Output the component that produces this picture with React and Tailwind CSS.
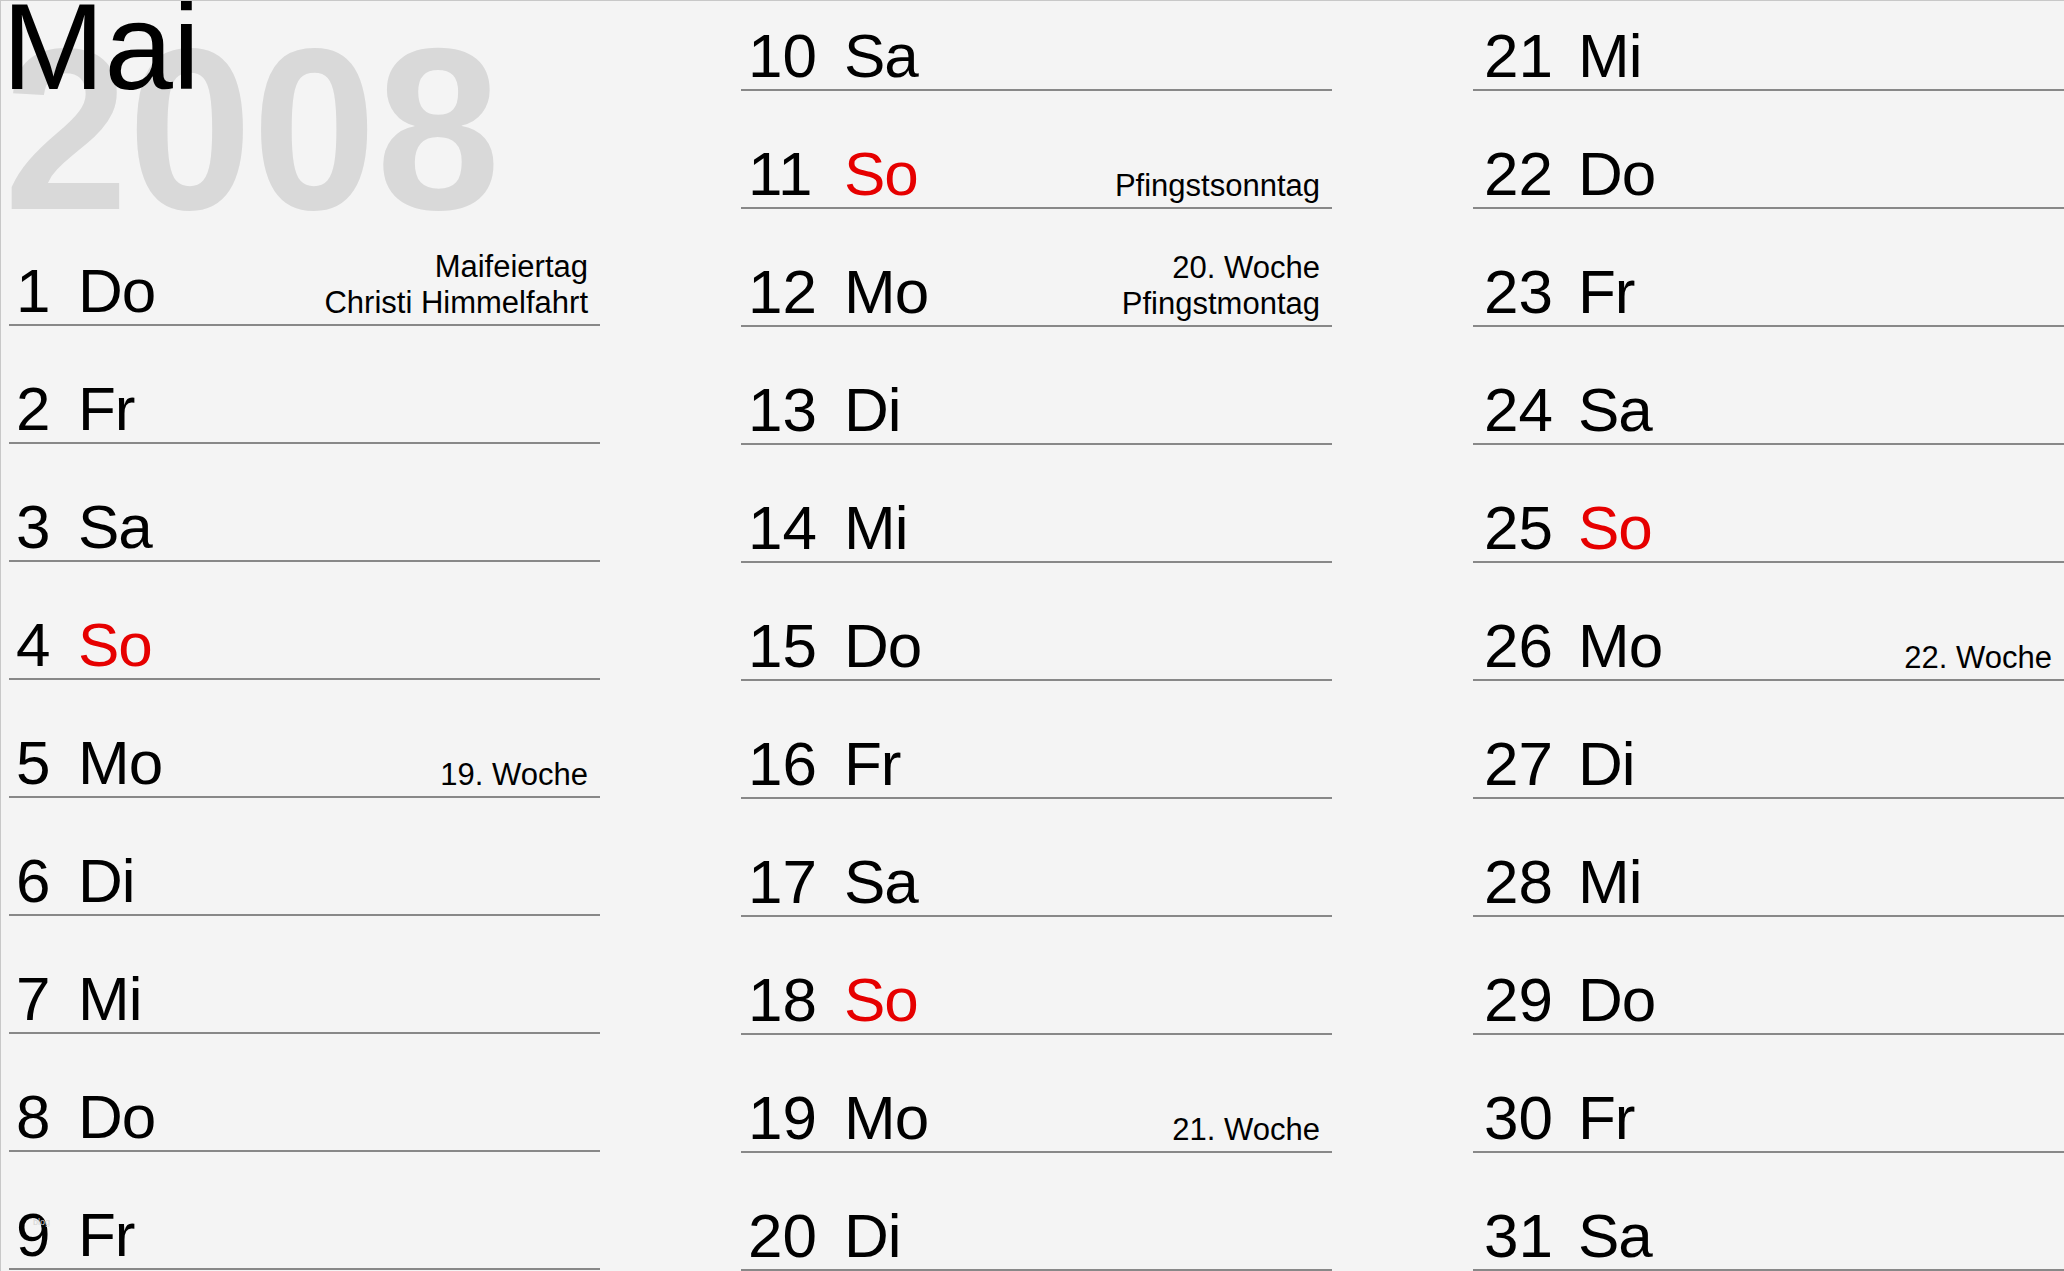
import React from "react";

const DAYS = ["Do","Fr","Sa","So","Mo","Di","Mi"];
const LABELS = {
  1: ["Maifeiertag", "Christi Himmelfahrt"],
  5: ["19. Woche"],
  11: ["Pfingstsonntag"],
  12: ["20. Woche", "Pfingstmontag"],
  19: ["21. Woche"],
  26: ["22. Woche"],
};

function dayRow(d, first, numCls, extra) {
  const wd = DAYS[(d - 1) % 7];
  const lab = LABELS[d];
  return (
    <div
      key={d}
      className={
        (first ? "h-[90px] " : "h-[118px] ") +
        "relative flex items-end border-b-2 border-[#888888] shrink-0"
      }
    >
      <div className="flex items-end pb-[2px] text-[62px] leading-none text-black">
        <span className={numCls}>{d}</span>
        <span className={wd === "So" ? "text-[#e60000] tracking-[-1px]" : "text-black tracking-[-1px]"}>{wd}</span>
      </div>
      <div className="ml-auto pr-[12px] pb-[3px] text-right text-[31px] leading-[36px] text-black">
        {lab && lab.map((l) => <div key={l}>{l}</div>)}
      </div>
      {extra}
    </div>
  );
}

export default function App() {
  const col1 = [1, 2, 3, 4, 5, 6, 7, 8, 9];
  const col2 = [10, 11, 12, 13, 14, 15, 16, 17, 18, 19, 20];
  const col3 = [21, 22, 23, 24, 25, 26, 27, 28, 29, 30, 31];
  return (
    <div
      className="w-[2064px] h-[1271px] overflow-hidden bg-[#f4f4f4] border-l border-t border-[#c8c8c8] flex gap-[141px] pl-[8px]"
      style={{ fontFamily: '"Liberation Sans", Arial, sans-serif' }}
    >
      <div className="w-[591px] shrink-0 flex flex-col">
        <div className="relative h-[207px] shrink-0">
          <div className="mt-[14px] -ml-[5px] origin-left scale-x-[0.97] text-[230px] leading-none font-bold text-[#d9d9d9]">
            2008
          </div>
          <div className="absolute top-[-16px] left-[-7px] text-[123px] leading-none text-black">
            Mai
          </div>
        </div>
        {col1.map((d) =>
          dayRow(
            d,
            false,
            "w-[69px] pl-[7px]",
            d === 9 ? (
              <span className="absolute left-[24px] top-[64px] text-[9px] text-[#d4d4d4]">blog</span>
            ) : null
          )
        )}
      </div>
      <div className="w-[591px] shrink-0 flex flex-col">
        {col2.map((d, i) => dayRow(d, i === 0, "w-[103px] pl-[7px]"))}
      </div>
      <div className="w-[591px] shrink-0 flex flex-col">
        {col3.map((d, i) => dayRow(d, i === 0, "w-[105px] pl-[11px]"))}
      </div>
    </div>
  );
}
